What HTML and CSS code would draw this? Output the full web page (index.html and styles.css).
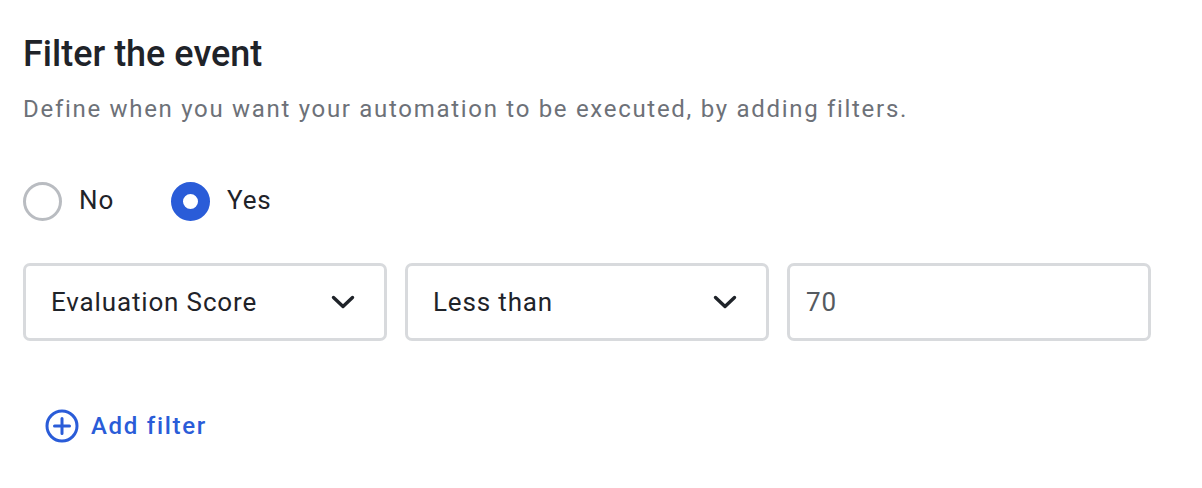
FILE: index.html
```html
<!DOCTYPE html>
<html>
<head>
<meta charset="utf-8">
<link rel="stylesheet" href="styles.css">
</head>
<body>
<div class="panel">
  <h1 class="title">Filter the event</h1>
  <p class="subtitle">Define when you want your automation to be executed, by adding filters.</p>
  <div class="radios">
    <label class="radio first"><span class="dot off"></span><span class="rlabel">No</span></label>
    <label class="radio"><span class="dot on"></span><span class="rlabel">Yes</span></label>
  </div>
  <div class="row">
    <div class="field select"><span>Evaluation Score</span>
      <svg class="chev" viewBox="0 0 24 14" width="24" height="14"><path d="M2.5 2.5L12 11.5 21.5 2.5" fill="none" stroke="#1f2329" stroke-width="3.4" stroke-linecap="round" stroke-linejoin="round"/></svg>
    </div>
    <div class="field select"><span>Less than</span>
      <svg class="chev" viewBox="0 0 24 14" width="24" height="14"><path d="M2.5 2.5L12 11.5 21.5 2.5" fill="none" stroke="#1f2329" stroke-width="3.4" stroke-linecap="round" stroke-linejoin="round"/></svg>
    </div>
    <div class="field input"><span>70</span></div>
  </div>
  <div class="add">
    <svg class="plus" viewBox="0 0 34 34" width="34" height="34"><circle cx="17" cy="17" r="15" fill="none" stroke="#2a5cd8" stroke-width="3"/><path d="M17 9.5v15M9.5 17h15" stroke="#2a5cd8" stroke-width="3" stroke-linecap="round"/></svg>
    <span>Add filter</span>
  </div>
</div>
</body>
</html>
```
FILE: styles.css
```css
html, body { margin: 0; padding: 0; background: #fff; }
body { font-family: Roboto, "Liberation Sans", sans-serif; }
.panel { padding: 32px 0 0 23px; width: 1128px; }
.title { margin: 0; font-size: 36px; font-weight: 500; line-height: 44px; color: #1f2329; }
.subtitle { margin: 17px 0 0; font-size: 24px; line-height: 32px; letter-spacing: 1.7px; color: #6d7178; }
.radios { display: flex; margin-top: 56px; align-items: center; height: 40px; }
.radio { display: flex; align-items: center; }
.radio.first { width: 148px; }
.dot { box-sizing: border-box; width: 39px; height: 39px; border-radius: 50%; flex: none; }
.dot.off { border: 3px solid #b9bcc1; }
.dot.on { border: 12px solid #2a5cd8; background: #fff; }
.rlabel { margin-left: 17px; padding-bottom: 3px; font-size: 26px; letter-spacing: 0.85px; color: #1f2329; }
.row { display: grid; grid-template-columns: repeat(3, 1fr); gap: 18px; margin-top: 42px; }
.field { min-width: 0; box-sizing: border-box; height: 78px; border: 3px solid #d8dadd; border-radius: 7px; display: flex; align-items: center; justify-content: space-between; padding: 0 29px 0 25px; font-size: 26px; letter-spacing: 0.85px; color: #1f2329; }
.field.input { color: #555a60; padding-left: 16px; }
.chev { display: block; flex: none; }
.add { display: flex; align-items: center; margin-top: 68px; margin-left: 22px; color: #2a5cd8; font-size: 24px; font-weight: 500; letter-spacing: 1.7px; }
.add span { margin-left: 12px; }
.plus { display: block; flex: none; }
```
